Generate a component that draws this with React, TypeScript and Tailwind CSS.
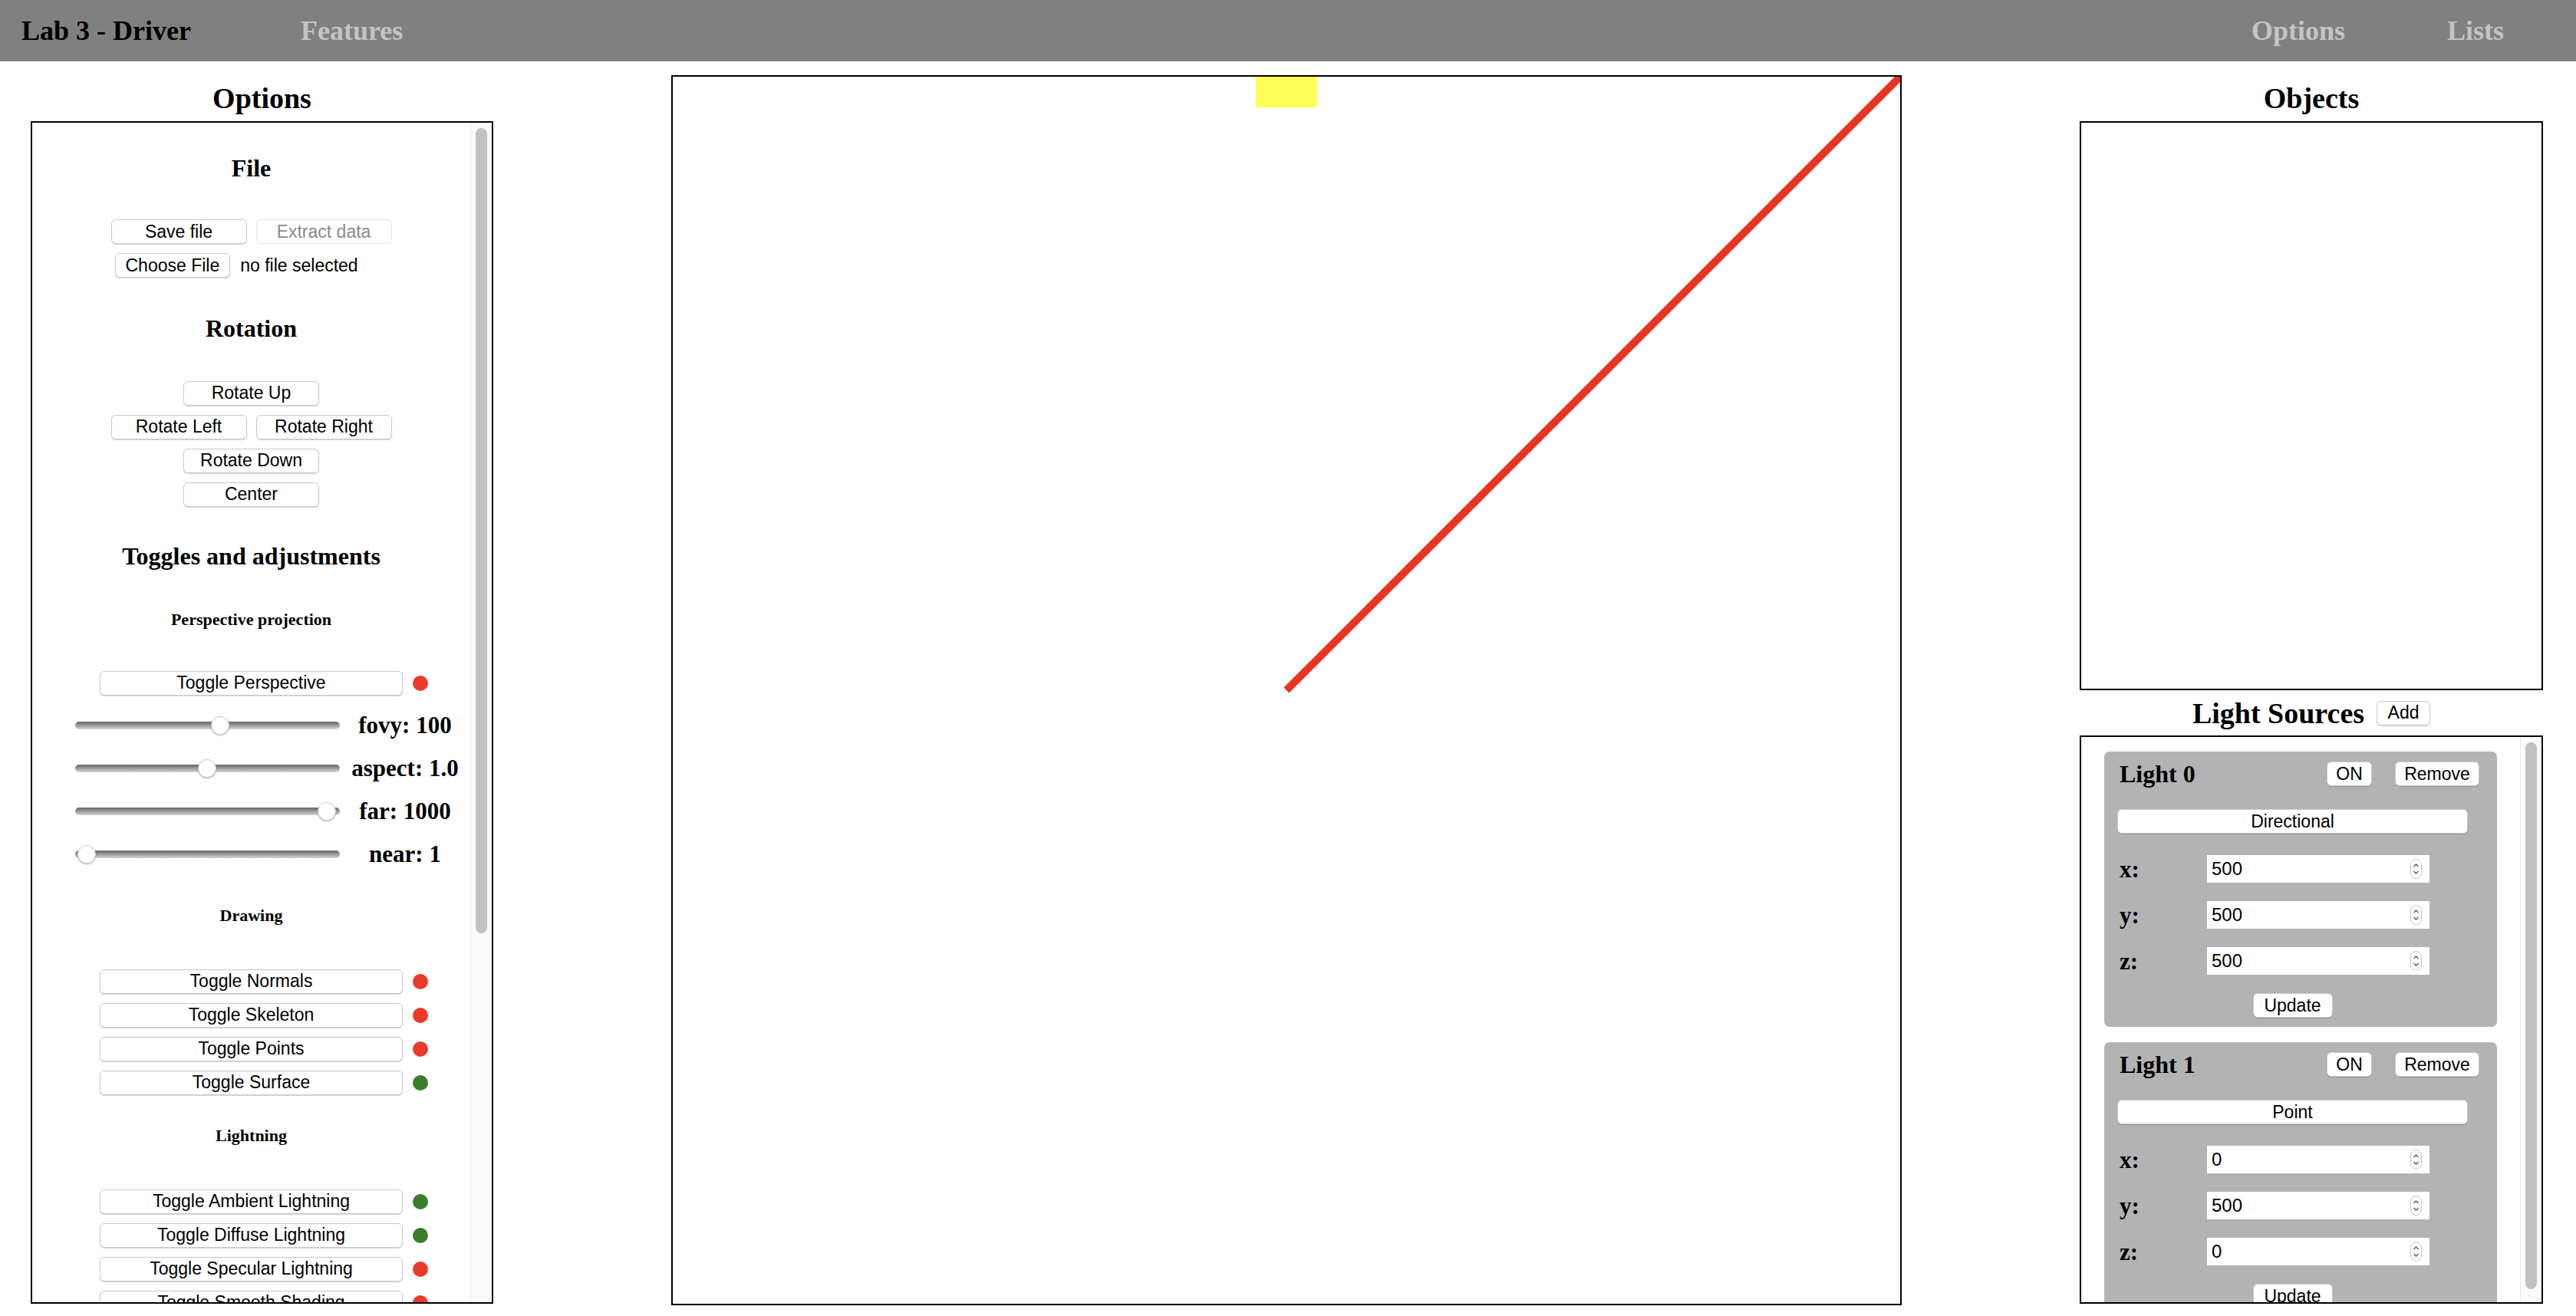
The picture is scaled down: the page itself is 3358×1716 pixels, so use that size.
import React from "react";

const serif = "font-['Liberation_Serif','Times_New_Roman',serif]";
const sans = "font-['Liberation_Sans',Arial,sans-serif]";

function Btn({ children, className = "", disabled = false }: { children: React.ReactNode; className?: string; disabled?: boolean }) {
    const base = `h-[32px] shrink-0 rounded-[6px] bg-white text-[23px] leading-none ${sans}`;
    const look = disabled
        ? "border border-[#e3e3e3] text-[#8a8a8a]"
        : "border border-[#c9c9c9] text-black shadow-[0_1px_1px_rgba(0,0,0,0.18)]";
    return (
        <button type="button" className={`${base} ${look} ${className}`}>
            {children}
        </button>
    );
}

function Dot({ on }: { on: boolean }) {
    return <span className={`ml-[13px] block h-[20px] w-[20px] rounded-full ${on ? "bg-[#3b7d2b]" : "bg-[#ea3a2c]"}`} />;
}

function ToggleRow({ label, on, className = "" }: { label: string; on: boolean; className?: string }) {
    return (
        <div className={`grid w-full grid-cols-[1fr_395px_1fr] items-center ${className}`}>
            <div />
            <Btn className="w-[395px]">{label}</Btn>
            <Dot on={on} />
        </div>
    );
}

function Slider({ pos, label }: { pos: number; label: string }) {
    return (
        <div className="flex h-[56px] w-full items-center pl-[56px]">
            <div className="relative h-[10px] w-[345px] rounded-full bg-linear-to-b from-[#666666] to-[#d6d6d6]">
                <div
                    className="absolute top-1/2 h-[24px] w-[24px] -translate-y-1/2 rounded-full border border-[#cdcdcd] bg-white shadow-[0_1px_2px_rgba(0,0,0,0.3)]"
                    style={{ left: pos }}
                />
            </div>
            <span className={`flex-1 text-center text-[31px] font-bold leading-none ${serif}`}>{label}</span>
        </div>
    );
}

function SubHead({ children, className = "" }: { children: React.ReactNode; className?: string }) {
    return <h5 className={`text-[22px] font-bold leading-[28px] ${serif} ${className}`}>{children}</h5>;
}

function SectionHead({ children, className = "" }: { children: React.ReactNode; className?: string }) {
    return <h3 className={`text-[32px] font-bold leading-[40px] ${serif} ${className}`}>{children}</h3>;
}

function Spinner() {
    return (
        <svg width="15" height="26" viewBox="0 0 15 26" className="mr-[10px]">
            <rect x="0.5" y="0.5" width="14" height="25" rx="7" fill="#fff" stroke="#c4c4c4" />
            <path d="M4.5 10 L7.5 7 L10.5 10" fill="none" stroke="#555" strokeWidth="1.3" />
            <path d="M4.5 16 L7.5 19 L10.5 16" fill="none" stroke="#555" strokeWidth="1.3" />
        </svg>
    );
}

function CoordRow({ axis, value, className = "" }: { axis: string; value: string; className?: string }) {
    return (
        <div className={`flex h-[36px] items-center ${className}`}>
            <span className={`w-[117px] pl-[3px] text-[31px] font-bold leading-none ${serif}`}>{axis}:</span>
            <div className={`flex h-[36px] w-[290px] items-center justify-between bg-white pl-[6px] text-[24px] ${sans}`}>
                <span>{value}</span>
                <Spinner />
            </div>
        </div>
    );
}

function LightCard({ n, type, x, y, z, className = "" }: { n: number; type: string; x: string; y: string; z: string; className?: string }) {
    return (
        <div className={`ml-[30px] w-[512px] shrink-0 rounded-[7px] bg-[#b3b3b3] pt-[13px] pr-[23px] pb-[12px] pl-[17px] ${className}`}>
            <div className="flex h-[32px] items-center">
                <h3 className={`flex-1 pl-[3px] text-[32px] font-bold leading-none ${serif}`}>Light {n}</h3>
                <Btn className="w-[59px]">ON</Btn>
                <Btn className="ml-[30px] w-[110px]">Remove</Btn>
            </div>
            <Btn className="mt-[30px] block w-[457px]">{type}</Btn>
            <CoordRow axis="x" value={x} className="mt-[28px]" />
            <CoordRow axis="y" value={y} className="mt-[24px]" />
            <CoordRow axis="z" value={z} className="mt-[24px]" />
            <div className="mt-[24px] flex w-[457px] justify-center">
                <Btn className="w-[104px]">Update</Btn>
            </div>
        </div>
    );
}

function ScrollTrack({ thumb }: { thumb: string }) {
    return (
        <div className="w-[28px] shrink-0 border-l border-[#e9e9e9] bg-[#fafafa] pt-[7px]">
            <div className={`mx-auto w-[15px] rounded-full bg-[#c1c1c1] ${thumb}`} />
        </div>
    );
}

export default function App() {
    return (
        <div className="h-[1716px] w-[3358px] overflow-hidden bg-white text-black">
            <nav className={`flex h-[80px] items-center bg-[#808080] pr-[94px] pl-[28px] text-[36px] font-bold ${serif}`}>
                <span className="text-black">Lab 3 - Driver</span>
                <span className="ml-[143px] text-[#c4c4c4]">Features</span>
                <span className="ml-auto text-[#c4c4c4]">Options</span>
                <span className="ml-[133px] text-[#c4c4c4]">Lists</span>
            </nav>

            <main className="flex justify-between pt-[18px] pr-[43px] pl-[40px]">
                {/* options column */}
                <section className="flex w-[603px] flex-col">
                    <h2 className={`h-[60px] text-center text-[38px] font-bold leading-[60px] ${serif}`}>Options</h2>
                    <div className="flex h-[1542px] border-2 border-black">
                        <div className="flex-1 overflow-hidden">
                            <div className="flex flex-col items-center">
                                <SectionHead className="mt-[39px]">File</SectionHead>
                                <div className="mt-[47px] flex gap-[12px]">
                                    <Btn className="w-[177px]">Save file</Btn>
                                    <Btn className="w-[177px]" disabled>Extract data</Btn>
                                </div>
                                <div className={`mt-[11px] flex w-[356px] items-center text-[23px] ${sans}`}>
                                    <Btn className="px-[13px]">Choose File</Btn>
                                    <span className="ml-[13px]">no file selected</span>
                                </div>

                                <SectionHead className="mt-[44px]">Rotation</SectionHead>
                                <Btn className="mt-[49px] w-[177px]">Rotate Up</Btn>
                                <div className="mt-[12px] flex gap-[12px]">
                                    <Btn className="w-[177px]">Rotate Left</Btn>
                                    <Btn className="w-[177px]">Rotate Right</Btn>
                                </div>
                                <Btn className="mt-[12px] w-[177px]">Rotate Down</Btn>
                                <Btn className="mt-[12px] w-[177px]">Center</Btn>

                                <SectionHead className="mt-[44px]">Toggles and adjustments</SectionHead>
                                <SubHead className="mt-[49px]">Perspective projection</SubHead>
                                <ToggleRow label="Toggle Perspective" on={false} className="mt-[53px]" />
                                <div className="mt-[11px] w-full">
                                    <Slider pos={177} label="fovy: 100" />
                                    <Slider pos={160} label="aspect: 1.0" />
                                    <Slider pos={316} label="far: 1000" />
                                    <Slider pos={3} label="near: 1" />
                                </div>

                                <SubHead className="mt-[38px]">Drawing</SubHead>
                                <ToggleRow label="Toggle Normals" on={false} className="mt-[56px]" />
                                <ToggleRow label="Toggle Skeleton" on={false} className="mt-[12px]" />
                                <ToggleRow label="Toggle Points" on={false} className="mt-[12px]" />
                                <ToggleRow label="Toggle Surface" on={true} className="mt-[12px]" />

                                <SubHead className="mt-[39px]">Lightning</SubHead>
                                <ToggleRow label="Toggle Ambient Lightning" on={true} className="mt-[56px]" />
                                <ToggleRow label="Toggle Diffuse Lightning" on={true} className="mt-[12px]" />
                                <ToggleRow label="Toggle Specular Lightning" on={false} className="mt-[12px]" />
                                <ToggleRow label="Toggle Smooth Shading" on={false} className="mt-[12px]" />
                            </div>
                        </div>
                        <ScrollTrack thumb="h-[1050px]" />
                    </div>
                </section>

                {/* canvas */}
                <div className="h-[1604px] w-[1604px] shrink-0 border-2 border-black bg-white">
                    <svg width="1600" height="1600" viewBox="0 0 1600 1600" className="block">
                        <rect x="760" y="0" width="80" height="40" fill="#ffff55" />
                        <line x1="800" y1="800" x2="1600" y2="0" stroke="#ea3323" strokeWidth="10" />
                    </svg>
                </div>

                {/* lists column */}
                <section className="flex w-[604px] flex-col">
                    <h2 className={`h-[60px] text-center text-[38px] font-bold leading-[60px] ${serif}`}>Objects</h2>
                    <div className="h-[742px] border-2 border-black" />
                    <div className="flex h-[59px] items-center justify-center gap-[16px]">
                        <h2 className={`text-[38px] font-bold leading-none ${serif}`}>Light Sources</h2>
                        <Btn className="w-[70px]">Add</Btn>
                    </div>
                    <div className="flex h-[741px] border-2 border-black">
                        <div className="flex-1 overflow-hidden pt-[19px]">
                            <LightCard n={0} type="Directional" x="500" y="500" z="500" />
                            <LightCard n={1} type="Point" x="0" y="500" z="0" className="mt-[20px]" />
                        </div>
                        <ScrollTrack thumb="h-[713px]" />
                    </div>
                </section>
            </main>
        </div>
    );
}
